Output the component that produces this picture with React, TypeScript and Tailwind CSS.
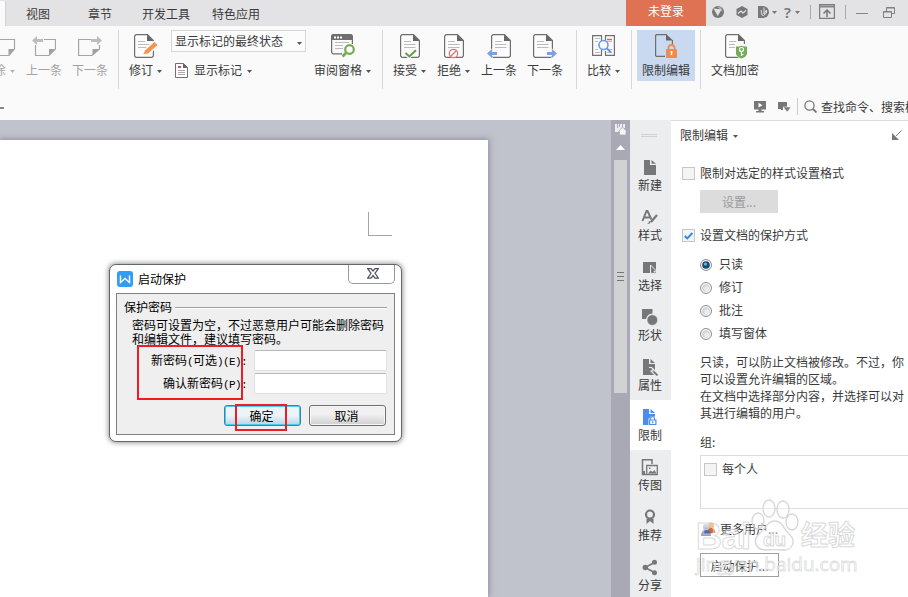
import type { ReactNode } from "react";

const tabs = [
  { label: "视图", width: "w-[62px]" },
  { label: "章节", width: "w-[54px]" },
  { label: "开发工具", width: "w-[70px]" },
  { label: "特色应用", width: "w-[60px]" },
];

function Caret({ className = "text-[#555]" }: { className?: string }) {
  return (
    <svg className={`shrink-0 ${className}`} width="5" height="3" viewBox="0 0 5 3" fill="currentColor">
      <path d="M0 0h5L2.500 3z" />
    </svg>
  );
}

function Divider() {
  return <div className="mt-1 h-[59px] w-px shrink-0 bg-[#d8d8d8]" />;
}

type ToolProps = { label: string; caret?: boolean; muted?: boolean; active?: boolean; className: string; children: ReactNode };

function Tool({ label, caret, muted, active, className, children }: ToolProps) {
  return (
    <button
      className={`mt-1 flex h-[51px] shrink-0 flex-col items-center pt-1 ${active ? "bg-[#c8d9f0]" : ""} ${muted ? "text-[#a3a3a3]" : "text-[#3a3a3a]"} ${className}`}
    >
      {children}
      <span className="mt-[3px] flex items-center gap-1 leading-[18px] whitespace-nowrap">
        {label}
        {caret && <Caret className={`mt-0.5 ${muted ? "text-[#b5b5b5]" : "text-[#555]"}`} />}
      </span>
    </button>
  );
}

// sheet with a folded bottom corner, used by the comment tools
function Sheet({ dir }: { dir?: "left" | "right" }) {
  return (
    <svg width="24" height="24" viewBox="0 0 24 24" fill="none" className="shrink-0">
      {dir === "left" && (
        <>
          <path d="M12 5.500H23.500V15L17 21.500H3.500V11" stroke="#a5a5a5" strokeWidth="1.200" />
          <path d="M23.500 15H17v6.500z" fill="#a0a0a0" />
          <path d="M0 6.500 5 2v3h6v3H5v3z" fill="#bdbdbd" />
        </>
      )}
      {dir === "right" && (
        <>
          <path d="M13 5.500H.6V21.500H14L21.500 15V11" stroke="#a5a5a5" strokeWidth="1.200" />
          <path d="M21.500 15H14.500v6.500z" fill="#a0a0a0" />
          <path d="M24 6.500 19 2v3h-6v3h6v3z" fill="#bdbdbd" />
        </>
      )}
      {!dir && (
        <>
          <path d="M2 5.500H22.500V15L17 21.500H2" stroke="#a5a5a5" strokeWidth="1.200" />
          <path d="M22.500 15H16.500v6.500z" fill="#a0a0a0" />
        </>
      )}
    </svg>
  );
}

function Doc({ x = 0 }: { x?: number }) {
  return (
    <g transform={`translate(${x} 0)`} fill="none">
      <path d="M13.500.6H2L.6 2V22L2 23.400H18L19.400 22V6.500z" stroke="#6e6e6e" strokeWidth="1.200" fill="#fcfcfc" />
      <path d="M13 .5V7h6.500z" fill="#666" />
      <path d="M4 7.500h7M4 10.500h11.500M4 13.500h11.500" stroke="#bcbcbc" />
    </g>
  );
}

function Icon({ width, children }: { width: 24 | 25; children: ReactNode }) {
  return (
    <svg width={width} height="24" viewBox={`0 0 ${width} 24`} fill="none" className="shrink-0 overflow-visible">
      {children}
    </svg>
  );
}

function TitleBar() {
  return (
    <div className="flex h-[26px] bg-[#e3e3e6]">
      <div className="mt-px w-[6px] border-r border-[#d2d2d5] bg-[#fafafa]" />
      <div className="flex flex-1 pl-5 text-[#3a3a3a]">
        {tabs.map((tab) => (
          <span key={tab.label} className={`shrink-0 pt-1 leading-[20px] ${tab.width}`}>
            {tab.label}
          </span>
        ))}
      </div>
      <button className="h-[26px] w-20 bg-[#df7253] pb-[4px] leading-[22px] text-white">未登录</button>
      <div className="flex w-[202px] items-start pl-1.5 pt-1 text-[#777]">
        <svg width="12" height="16" viewBox="0 0 12 16">
          <circle cx="6" cy="8" r="6" fill="#777" />
          <path d="M1.500 4.500 9.500 5.500 5.800 12z" fill="#e3e3e6" />
          <path d="M5 2.500 10.500 8 9 3.500z" fill="#e3e3e6" opacity=".6" />
        </svg>
        <svg className="ml-3" width="12" height="16" viewBox="0 0 12 16">
          <path d="M6 2l5.500 3v6L6 14 .5 11V5z" fill="#777" />
          <path d="M2 9.500 5 7l2 2 3-2.500" stroke="#e3e3e6" strokeWidth="1.200" fill="none" />
        </svg>
        <svg className="ml-2.5" width="11" height="16" viewBox="0 0 11 16">
          <path d="M0 2h5a6 6 0 0 1 0 12H0z" fill="#777" />
          <path d="m3 6 1 5 1.500.5L8.500 9V6L6 10V3.500" stroke="#e3e3e6" fill="none" />
        </svg>
        <span className="ml-[3px] pt-[7px]">
          <Caret className="block" />
        </span>
        <span className="ml-[7px] w-[9px] font-['Noto_Sans',sans-serif] text-[15px] font-semibold leading-[17px]">?</span>
        <span className="ml-0.5 pt-[7px]">
          <Caret className="block" />
        </span>
        <span className="ml-[10px] mt-px h-[14px] w-px bg-[#aaa]" />
        <svg className="ml-2" width="16" height="15" viewBox="0 0 16 15" fill="none">
          <path d="M.6.6h14.800v13.800H.6z" stroke="#7b7b7b" strokeWidth="1.200" />
          <path d="M0 1.500h16v2H0z" fill="#858585" />
          <path d="M8 13V6.500M4.500 9.500 8 6l3.500 3.500" stroke="#777" strokeWidth="1.500" />
        </svg>
        <span className="ml-[10px] mt-px h-[14px] w-px bg-[#aaa]" />
        <span className="ml-[10px] mt-[9px] h-px w-3 bg-[#858585]" />
        <svg className="ml-[15px] mt-[3px]" width="12" height="11" viewBox="0 0 12 11" fill="none" stroke="#808080">
          <path d="M3.500 4V.5h8v6H9M3.500 1h8" />
          <path d="M.5 4.500h8v6h-8zM.5 5h8" />
        </svg>
      </div>
    </div>
  );
}

function Ribbon() {
  return (
    <div className="h-[94px] bg-[#fafafa]">
      <div className="flex h-[69px] overflow-hidden">
        <div className="-ml-[25px] flex shrink-0 pr-[5px]">
          <Tool label="删除" caret muted className="w-[46px]">
            <span className="-mr-3">
              <Sheet />
            </span>
          </Tool>
          <Tool label="上一条" muted className="w-[46px]">
            <Sheet dir="left" />
          </Tool>
          <Tool label="下一条" muted className="w-[46px]">
            <Sheet dir="right" />
          </Tool>
        </div>
        <Divider />
        <Tool label="修订" caret className="ml-px w-[51px]">
          <Icon width={25}>
            <Doc x={1} />
            <path d="M10 20.500 12 16 21.500 7.500 25 11l-9.500 9z" fill="#fafafa" stroke="#fafafa" strokeWidth="2" />
            <path d="M12 16.500 21.500 8 24.500 11l-9.500 8.500-4.500.5z" fill="#f5954a" />
          </Icon>
        </Tool>
        <div className="flex w-[135px] shrink-0 flex-col pt-1 text-[#3a3a3a]">
          <div className="flex h-[22px] items-center justify-between border border-[#d6d6d6] bg-[#fcfcfc] pl-[3px] pr-[3px] leading-5">
            显示标记的最终状态
            <Caret className="mt-1 text-[#555]" />
          </div>
          <div className="mt-[9px] flex h-[18px] items-center pl-1 leading-[18px]">
            <svg width="13" height="15" viewBox="0 0 13 15" fill="none">
              <path d="M.5.5h8l4 4v10H.5z" stroke="#707070" fill="#fff" />
              <path d="M8 0v5h5z" fill="#666" />
              <path d="M3 3h3v2H3z" fill="#dc5050" />
              <path d="M3 7.500h7M3 9.500h7M3 11.500h7" stroke="#aaa" />
            </svg>
            <span className="ml-1.5 mr-[5px]">显示标记</span>
            <Caret className="mt-0.5 text-[#555]" />
          </div>
        </div>
        <Tool label="审阅窗格" caret className="mr-[3px] w-[73px]">
          <Icon width={25}>
            <path d="M1.600 3v15.500L3 19.900H12M22.400 5v5" stroke="#6e6e6e" strokeWidth="1.200" />
            <path d="M1 1.500 2.500 0h19L23 1.500V6H1z" fill="#6e6e6e" />
            <path d="M4 2.500h2v2H4zM7 2.500h2v2H7zM10 2.500h2v2h-2z" fill="#fff" />
            <path d="M5 8.500h14M5 11.500h8M5 14.500h8" stroke="#bcbcbc" />
            <circle cx="19.500" cy="15.500" r="4.300" stroke="#72ad50" strokeWidth="2.200" />
            <path d="m16 19-3.500 3.500" stroke="#72ad50" strokeWidth="2.600" />
          </Icon>
        </Tool>
        <Divider />
        <Tool label="接受" caret className="ml-[5px] w-[43px]">
          <Icon width={25}>
            <Doc x={3} />
            <path d="m8 18.500 4 4L19 16" stroke="#fafafa" strokeWidth="4" />
            <path d="m8.500 19 3.800 3.500L19 16.200" stroke="#5ea244" strokeWidth="2" />
          </Icon>
        </Tool>
        <Tool label="拒绝" caret className="w-[45px]">
          <Icon width={25}>
            <Doc x={3} />
            <circle cx="12.500" cy="19.500" r="4.200" fill="#fafafa" stroke="#e07878" strokeWidth="1.300" />
            <path d="m9.700 22.300 5.600-5.600" stroke="#e07878" strokeWidth="1.300" />
          </Icon>
        </Tool>
        <Tool label="上一条" className="w-[46px]">
          <Icon width={24}>
            <Doc x={4} />
            <path d="M-1 19.500 5.500 14v3.500H11v4H5.500V25z" fill="#fafafa" />
            <path d="M0 19.500 5 15v3h5v3H5v3z" fill="#7d9fea" />
          </Icon>
        </Tool>
        <Tool label="下一条" className="mr-2 w-[46px]">
          <Icon width={24}>
            <Doc />
            <path d="M25 19.500 18.500 14v3.500H13v4h5.500V25z" fill="#fafafa" />
            <path d="M24 19.500 19 15v3h-5v3h5v3z" fill="#7d9fea" />
          </Icon>
        </Tool>
        <Divider />
        <Tool label="比较" caret className="ml-[5px] mr-1.5 w-[43px]">
          <Icon width={25}>
            <path d="M11 1.600H1.600v19.800H11M14 1.600h9.400v19.800H14M10.500 2v5M14.500 2v5M10.500 16v5M14.500 17v4" stroke="#707070" strokeWidth="1.200" />
            <path d="M4 4.500h5M4 7.500h3M4 15.500h3M4 18.500h5M16 7.500h5M18 15.500h3M16 18.500h5" stroke="#bcbcbc" />
            <path d="M16 5.500h5" stroke="#e06060" strokeWidth="1.500" />
            <circle cx="12.500" cy="11" r="4.500" fill="#fafafa" stroke="#689af0" strokeWidth="1.600" />
            <path d="m16 14.500 4 4" stroke="#5c92ee" strokeWidth="1.800" />
          </Icon>
        </Tool>
        <Divider />
        <Tool label="限制编辑" active className="ml-[5px] mr-[5px] w-[58px]">
          <Icon width={24}>
            <path d="M13 .6H2.500L1.600 1.500V21.500L2.500 22.400H11M18.400 6v5" stroke="#6e6e6e" strokeWidth="1.200" />
            <path d="M12 0v6.500h7z" fill="#666" />
            <path d="M14.500 16v-2a3 3 0 0 1 6 0v2" stroke="#f28a50" strokeWidth="1.800" />
            <rect x="12" y="15" width="11" height="9" rx="1" fill="#f28a50" />
            <path d="M17.500 17v4M16.500 18h2" stroke="#fff" strokeWidth="1.400" />
          </Icon>
        </Tool>
        <Divider />
        <Tool label="文档加密" className="w-[68px]">
          <Icon width={24}>
            <Doc x={2} />
            <path d="M12 10h13v11l-5 4h-3l-5-4z" fill="#fafafa" />
            <path d="M13 12.500q5 0 5.500-1 .5 1 5.500 1V20q-1 3-5.500 4.500Q14 23 13 20z" fill="#74ac57" />
            <circle cx="18.500" cy="15.500" r="2" stroke="#fff" strokeWidth="1.200" />
            <path d="M18.500 17.500V22M18.500 20.500h2" stroke="#fff" strokeWidth="1.200" />
          </Icon>
        </Tool>
      </div>
      <div className="flex h-[25px] items-center justify-between">
        <div className="h-[2px] w-1 bg-[#888]" />
        <div className="flex w-[154px] items-center overflow-hidden pb-0.5 whitespace-nowrap text-[#3a3a3a]">
          <svg className="shrink-0" width="12" height="12" viewBox="0 0 12 12">
            <path d="M0 0h12v8.500H7.500V10H10v1.500H2V10h2.500V8.500H0z" fill="#777" />
            <path d="m4.500 1.800 4 2.400-4 2.400z" fill="#fff" />
          </svg>
          <svg className="ml-3 shrink-0" width="13" height="12" viewBox="0 0 13 12" fill="#777">
            <path d="M0 1h9v5H5v3H3V8H0z" />
            <path d="M5 6h8L9.300 11z" stroke="#fafafa" strokeWidth=".6" />
          </svg>
          <span className="ml-1.5 h-[17px] w-px shrink-0 bg-[#ccc]" />
          <svg className="ml-1.5 shrink-0" width="13" height="13" viewBox="0 0 13 13" fill="none" stroke="#777" strokeWidth="1.300">
            <circle cx="5.500" cy="5.500" r="4.600" />
            <path d="m9 9 3.500 3.500" strokeWidth="1.800" />
          </svg>
          <span className="ml-1 leading-[18px]">查找命令、搜索模板</span>
        </div>
      </div>
    </div>
  );
}

function Mono({ children }: { children: ReactNode }) {
  return <span className="font-['Liberation_Mono',monospace] text-[11px] tracking-[-0.6px]">{children}</span>;
}

function PasswordField({ children }: { children: ReactNode }) {
  return (
    <label className="flex h-[21px] items-center justify-end gap-[7px] whitespace-nowrap">
      <span>{children}</span>
      <input className="h-[21px] w-[133px] rounded-[2px] border border-[#dde1e8] border-t-[#b5b8bd] bg-white" />
    </label>
  );
}

function PasswordDialog() {
  return (
    <div className="absolute left-[109px] top-[144px] h-[178px] w-[293px] rounded-[7px] border border-[#666] bg-white px-1.5 text-black shadow-[0_0_5px_1px_rgba(0,0,0,0.4)]">
      <div className="flex h-7 items-start justify-between">
        <div className="flex items-center pl-px pt-[5px]">
          <svg width="16" height="18" viewBox="0 0 16 18" fill="none">
            <rect y="1" width="16" height="16" rx="3" fill="#319df4" />
            <path d="M3.500 5.500v7L8 8.500l4.500 4v-7" stroke="#fff" strokeWidth="1.400" />
          </svg>
          <span className="-mt-px ml-[5px] leading-[18px]">启动保护</span>
        </div>
        <div className="flex h-[19px] w-[47px] items-center justify-center rounded-b-[5px] border border-t-0 border-[#999] bg-white pb-0.5 pl-0.5">
          <svg width="12" height="11" viewBox="0 0 12 11" fill="#fff" stroke="#4a5160" strokeWidth="1.200">
            <path d="M.6.6h3.400L6 3 8 .6h3.400L8 5.300l3.400 4.900H8L6 7.600l-2 2.600H.6L4 5.300z" />
          </svg>
        </div>
      </div>
      <div className="h-[142px] border border-[#7f7f7f] bg-[#efefef] pl-[7px] pr-[7px] pt-1">
        <div className="flex h-[18px] items-center leading-[18px]">
          保护密码
          <div className="ml-[3px] h-px flex-1 bg-[#a0a0a0] shadow-[0_1px_0_#fff]" />
        </div>
        <p className="pl-2 pt-[2px] leading-[14px] whitespace-nowrap">
          密码可设置为空，不过恶意用户可能会删除密码
          <br />
          和编辑文件，建议填写密码。
        </p>
        <div className="mt-1 flex flex-col gap-[2px]">
          <PasswordField>
            新密码<Mono>(</Mono>可选<Mono>)(E):</Mono>
          </PasswordField>
          <PasswordField>
            确认新密码<Mono>(P):</Mono>
          </PasswordField>
        </div>
        <div className="mt-[11px] flex justify-end gap-2 pr-px">
          <button className="h-[21px] w-[77px] rounded-[3px] border border-[#3c7fb1] bg-linear-to-b from-[#edf4f8] from-50% to-[#b9d3e2] to-100% pr-0.5 leading-[18px] shadow-[inset_0_0_0_1px_#48cdf2]">
            确定
          </button>
          <button className="h-[21px] w-[77px] rounded-[3px] border border-[#707070] bg-linear-to-b from-[#f0f0f0] from-45% to-[#cfcfcf] pr-0.5 leading-[18px] shadow-[inset_0_0_0_1px_#f6f6f6]">
            取消
          </button>
        </div>
      </div>
      <div className="absolute left-[27px] top-[80px] h-[55px] w-[106px] border-2 border-[#ee1c25]" />
      <div className="absolute left-[125px] top-[139px] h-[27px] w-[52px] border-2 border-[#ee1c25]" />
    </div>
  );
}

function Canvas() {
  return (
    <div className="relative flex-1 overflow-hidden bg-[#c0c3cc] pt-5">
      <div className="h-full w-[488px] bg-white pl-[368px] pt-[72px] shadow-[0_0_6px_1px_rgba(110,105,125,0.6)]">
        <div className="size-6 border-b border-l border-[#a5a5a5]" />
      </div>
      <PasswordDialog />
    </div>
  );
}

function ScrollBar() {
  return (
    <div className="flex w-[19px] flex-col items-center bg-[#a9a9b5]">
      <svg className="mt-1" width="12" height="11" viewBox="0 0 12 11" fill="none">
        <path d="M0 0h10v4H6v4H0z" fill="#ececf1" />
        <path d="M2.500 0v4M4.500 0v3M7.500 0v3" stroke="#a9a9b5" />
        <path d="M7.500 3 12 7.500h-1V11H4.500V7.500h-1z" fill="#f5f5f8" stroke="#a9a9b5" strokeWidth=".8" />
      </svg>
      <svg className="mt-[10px]" width="9" height="5" viewBox="0 0 9 5">
        <path d="M0 5h9L4.500 0z" fill="#fff" />
      </svg>
      <div className="mt-[10px] flex h-[233px] w-[13px] flex-col items-center justify-center gap-[3px] bg-[#d1d2d4]">
        <span className="h-px w-[7px] bg-[#777]" />
        <span className="h-px w-[7px] bg-[#777]" />
        <span className="h-px w-[7px] bg-[#777]" />
      </div>
    </div>
  );
}

const sideItems = [
  {
    label: "新建",
    icon: (
      <>
        <path d="M3 1h6v5h6v10H3z" />
        <path d="M10.500 1v3.700H15z" />
      </>
    ),
  },
  {
    label: "样式",
    icon: (
      <>
        <path d="M1.500 12 5.500 2h1L10.500 10.500M3 8.500h5.500" fill="none" stroke="#777" strokeWidth="1.900" />
        <path d="M16 6 10 13" stroke="#777" strokeWidth="2.200" />
        <path d="M10 12.500q-1 3-4 2.500 2-.5 2-3z" />
      </>
    ),
  },
  {
    label: "选择",
    icon: (
      <>
        <path d="M2 3h13v11H2z" />
        <path d="m9.500 6 6 6-2.500.5 2 2.500-5.500-1z" stroke="#ecedef" />
      </>
    ),
  },
  {
    label: "形状",
    icon: (
      <>
        <path d="M1 0h10.500v4.500A7 7 0 0 0 5 10H1z" />
        <circle cx="11.300" cy="11" r="5.300" stroke="#ecedef" strokeWidth=".5" />
      </>
    ),
  },
  {
    label: "属性",
    icon: (
      <>
        <path d="M2 0h6v5h6v11H2z" />
        <path d="M9.500 0v4H14z" />
        <path d="M11 11 16.500 16.500" stroke="#ecedef" strokeWidth="4" />
        <path d="m11 11 5.500 5.500" stroke="#777" strokeWidth="1.800" />
        <path d="M8 8.500h2.500l1.500 1.500v2H9.500" fill="none" stroke="#ecedef" strokeWidth="1.200" />
      </>
    ),
  },
  {
    label: "限制",
    active: true,
    icon: (
      <>
        <path d="M2 0h6v5h6v11H2z" />
        <path d="M9.500 0v4H14z" />
        <path d="M7.500 17V9.500h1.500V8.500L10.500 7h2.500l1.500 1.500v1H16V17z" fill="#fff" />
        <path d="M9.700 11V9.500a1.900 1.900 0 0 1 3.800 0V11" fill="none" stroke="#4b8de8" strokeWidth="1.100" />
        <path d="M8.600 11h6.300v4.500H8.600z" fill="#fff" stroke="#4b8de8" strokeWidth="1.200" />
        <path d="M11.700 12.300v2" stroke="#4b8de8" strokeWidth="1.200" />
      </>
    ),
  },
  {
    label: "传图",
    icon: (
      <>
        <path d="M5 15.500H1.500V.8H11V5" fill="none" stroke="#777" strokeWidth="1.500" />
        <path d="M1 12h3v4H1z" />
        <path d="M5.700 6.500h10.600v9H5.700z" fill="none" stroke="#777" strokeWidth="1.300" />
        <path d="m7 14.500 2.500-3 2 1.500 2-2 2 3.500zM8 8.500h1.500V10H8z" />
      </>
    ),
  },
  {
    label: "推荐",
    icon: (
      <>
        <circle cx="9" cy="5.500" r="4" fill="none" stroke="#777" strokeWidth="2.200" />
        <path d="M5.500 9.500h7V15L9 12l-3.500 3z" />
      </>
    ),
  },
  {
    label: "分享",
    icon: (
      <>
        <path d="M13.500 3.500 4 8.500l9.500 5" fill="none" stroke="#777" strokeWidth="1.500" />
        <circle cx="13.500" cy="3.300" r="2.500" />
        <circle cx="4.300" cy="8.500" r="2.700" />
        <circle cx="13.500" cy="13.700" r="2.500" />
      </>
    ),
  },
];

function SideBar() {
  return (
    <div className="flex w-[41px] flex-col bg-[#ecedef]">
      <div className="flex h-[30px] shrink-0 flex-col items-center gap-px pr-1 pt-[14px]">
        <span className="h-px w-4 bg-[#ced1da]" />
        <span className="h-px w-4 bg-[#ced1da]" />
      </div>
      {sideItems.map((item) => (
        <div key={item.label} className={`flex h-[50px] shrink-0 flex-col items-center pr-px pt-[9px] text-[#3a3a3a] ${item.active ? "bg-white" : ""}`}>
          <svg width="18" height="17" viewBox="0 0 18 17" fill={item.active ? "#4b8de8" : "#777"}>
            {item.icon}
          </svg>
          <span className="leading-[18px]">{item.label}</span>
        </div>
      ))}
    </div>
  );
}

function CheckBox({ checked }: { checked?: boolean }) {
  return (
    <span className="mt-px flex size-[13px] shrink-0 items-center justify-center border border-[#c6c6c6] bg-[#f4f4f4]">
      {checked && (
        <svg width="9" height="8" viewBox="0 0 9 8" fill="none" stroke="#2f86ea" strokeWidth="1.900">
          <path d="M.7 4 3.300 6.500 8.400 1" />
        </svg>
      )}
    </span>
  );
}

function Radio({ label, checked }: { label: string; checked?: boolean }) {
  return (
    <label className="flex h-[23px] items-center gap-[7px]">
      <svg width="12" height="12" viewBox="0 0 12 12">
        <circle cx="6" cy="6" r="5.500" fill="#f4f4f4" stroke="#8e8f8f" />
        <circle cx="6" cy="6" r="3.800" fill={checked ? "#174a6d" : "#d3d5d8"} />
        <circle cx={checked ? 5.5 : 6.8} cy={checked ? 5 : 6.8} r={checked ? 1.6 : 2.6} fill={checked ? "#5cc0e8" : "#ececec"} />
      </svg>
      <span className="-mt-px">{label}</span>
    </label>
  );
}

function Watermark() {
  return (
    <div className="pointer-events-none absolute left-[25px] top-[378px] h-20 w-[170px] font-['Liberation_Sans','Noto_Sans_CJK_SC',sans-serif] text-white/40 [-webkit-text-stroke:1px_rgba(205,205,205,0.75)]">
      <svg className="absolute left-[55px] top-0" width="50" height="54" viewBox="0 0 50 54" fill="#fff" fillOpacity=".4" stroke="#d6d6d6" strokeWidth="1.300">
        <ellipse cx="18" cy="9.500" rx="6" ry="8.500" />
        <ellipse cx="32" cy="10.500" rx="6" ry="8.500" />
        <ellipse cx="7" cy="22" rx="6" ry="8" />
        <ellipse cx="41" cy="23" rx="6" ry="8" />
        <path d="M24 22c8 0 8 8 14 13 8 7 3 16-5 16-6 0-12-1-18 0-10 0-14-9-7-16 6-5 8-13 16-13z" />
      </svg>
      <span className="absolute left-0 top-[18px] text-[36px] font-bold leading-[40px] tracking-[-0.5px]">Bai</span>
      <span className="absolute left-[67px] top-[28px] text-[19px] font-bold leading-[26px]">du</span>
      <span className="absolute left-[105px] top-[20px] text-[27px] font-bold leading-[34px]">经验</span>
      <span className="absolute left-0 top-[52px] font-['Open_Sans',sans-serif] text-[19px] leading-[26px] text-white/60 [-webkit-text-stroke:0.8px_rgba(205,205,205,0.7)]">
        jingyan.baidu.com
      </span>
    </div>
  );
}

function TaskPane() {
  return (
    <div className="relative w-[237px] overflow-hidden border-t border-[#dcdcdc] bg-white pl-[9px] text-[#3a3a3a]">
      <div className="flex h-[28px] items-center pr-1.5">
        限制编辑
        <span className="ml-[5px] mt-0.5 flex flex-1">
          <Caret />
        </span>
        <svg width="10" height="10" viewBox="0 0 10 10" fill="none" stroke="#777">
          <path d="M9.500.5 4 6" />
          <path d="M0 3v7h7z" fill="#777" stroke="none" />
        </svg>
      </div>
      <label className="mt-[15px] flex h-[18px] items-center gap-[5px] pl-[2px]">
        <CheckBox />
        限制对选定的样式设置格式
      </label>
      <button className="ml-5 mt-[8px] block h-[23px] w-[78px] bg-[#dcdcdc] text-[#9a9a9a]">设置...</button>
      <label className="mt-[13px] flex h-[18px] items-center gap-[5px] pl-[2px]">
        <CheckBox checked />
        设置文档的保护方式
      </label>
      <div className="ml-5 mt-[9px]">
        <Radio label="只读" checked />
        <Radio label="修订" />
        <Radio label="批注" />
        <Radio label="填写窗体" />
      </div>
      <p className="ml-5 mt-[8px] leading-[17px] whitespace-nowrap">
        只读，可以防止文档被修改。不过，你
        <br />
        可以设置允许编辑的区域。
        <br />
        在文档中选择部分内容，并选择可以对
        <br />
        其进行编辑的用户。
      </p>
      <div className="ml-5 mt-3 leading-[18px]">组:</div>
      <div className="ml-5 mt-1 h-[54px] border border-r-0 border-[#dcdcdc] pl-[3px] pt-1">
        <label className="flex h-[18px] items-center gap-[5px]">
          <CheckBox />
          每个人
        </label>
      </div>
      <div className="ml-[21px] mt-[11px] flex h-[18px] items-center">
        <svg width="15" height="14" viewBox="0 0 15 14">
          <circle cx="10" cy="3.500" r="3" fill="#ef9a45" />
          <path d="M6 11q0-5 4-5t4.500 5z" fill="#cf6a20" />
          <circle cx="5" cy="5" r="3" fill="#b4bedd" />
          <path d="M0 14q0-6 5-6t5 6z" fill="#4d68b2" />
        </svg>
        <span className="ml-1">更多用户...</span>
      </div>
      <button className="ml-5 mt-[15px] block h-6 w-[79px] border border-[#a0a0a0] bg-white leading-[21px]">启动保护...</button>
      <Watermark />
    </div>
  );
}

export default function App() {
  return (
    <div className="flex h-[597px] w-[908px] flex-col overflow-hidden bg-white font-['Noto_Sans_CJK_SC',sans-serif] text-[12px]">
      <TitleBar />
      <Ribbon />
      <div className="flex min-h-0 flex-1">
        <Canvas />
        <ScrollBar />
        <SideBar />
        <TaskPane />
      </div>
    </div>
  );
}
